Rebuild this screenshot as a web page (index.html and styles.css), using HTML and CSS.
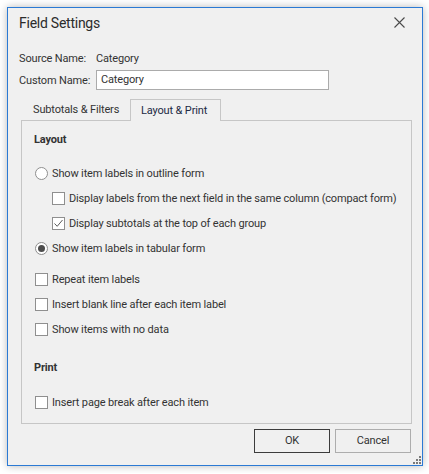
FILE: index.html
```html
<!DOCTYPE html>
<html>
<head>
<meta charset="utf-8">
<link rel="stylesheet" href="styles.css">
</head>
<body>
<div class="window">
  <div class="titlebar">
    <span class="title">Field Settings</span>
    <svg class="close" width="11" height="11" viewBox="0 0 11 11"><path d="M0.5 0.5 L10.5 10.5 M10.5 0.5 L0.5 10.5" stroke="#4a4a4a" stroke-width="1.1" fill="none"/></svg>
  </div>
  <div class="body">
    <div class="field-row">
      <span class="field-label">Source Name:</span>
      <span class="field-value">Category</span>
    </div>
    <div class="field-row field-row-2">
      <span class="field-label">Custom Name:</span>
      <div class="textbox">Category</div>
    </div>
    <div class="tabs">
      <div class="tab">Subtotals &amp; Filters</div>
      <div class="tab tab-active">Layout &amp; Print</div>
      <div class="tab-fill"></div>
    </div>
    <div class="panel">
      <div class="group-title">Layout</div>
      <div class="group">
        <div class="opt"><span class="radio"></span><span>Show item labels in outline form</span></div>
        <div class="opt opt-sub"><span class="check"></span><span>Display labels from the next field in the same column (compact form)</span></div>
        <div class="opt opt-sub"><span class="check"><svg width="11" height="11" viewBox="0 0 11 11"><path d="M1.5 5.5 L4.2 8.3 L9.5 2" stroke="#5a5a5a" stroke-width="1" fill="none"/></svg></span><span>Display subtotals at the top of each group</span></div>
        <div class="opt"><span class="radio radio-on"></span><span>Show item labels in tabular form</span></div>
      </div>
      <div class="group group-2">
        <div class="opt"><span class="check"></span><span>Repeat item labels</span></div>
        <div class="opt"><span class="check"></span><span>Insert blank line after each item label</span></div>
        <div class="opt"><span class="check"></span><span>Show items with no data</span></div>
      </div>
      <div class="group-title group-title-2">Print</div>
      <div class="group group-3">
        <div class="opt"><span class="check"></span><span>Insert page break after each item</span></div>
      </div>
    </div>
    <div class="buttons">
      <div class="btn btn-default">OK</div>
      <div class="btn">Cancel</div>
    </div>
  </div>
  <div class="grip">
    <span class="dot d1"></span>
    <span class="dot d2"></span><span class="dot d3"></span>
    <span class="dot d4"></span><span class="dot d5"></span><span class="dot d6"></span>
  </div>
</div>
</body>
</html>
```

FILE: styles.css
```css
html, body {
  margin: 0;
  padding: 0;
  background: #ffffff;
}
body {
  padding: 7px;
  font-family: Roboto, "Liberation Sans", sans-serif;
  font-size: 11px;
  letter-spacing: -0.15px;
  color: #333333;
  white-space: nowrap;
}
.window {
  position: relative;
  width: 414px;
  height: 457px;
  border: 1px solid #2b7ad4;
  background: #f0f0f0;
  box-shadow: 0 0 8px rgba(0, 0, 0, 0.28);
  display: flex;
  flex-direction: column;
}
.titlebar {
  height: 30px;
  display: flex;
  align-items: center;
  justify-content: space-between;
  padding: 0 17px 0 11px;
}
.title {
  font-size: 14px;
  letter-spacing: -0.25px;
  color: #2b2b2b;
}
.close {
  display: block;
  margin-top: -1px;
}
.body {
  padding: 10px 10px 12px 11px;
  display: flex;
  flex-direction: column;
}
.field-row {
  height: 20px;
  display: flex;
  align-items: center;
}
.field-row-2 {
  margin-top: 2px;
}
.field-label {
  width: 77px;
  flex: none;
}
.textbox {
  width: 227px;
  height: 18px;
  border: 1px solid #ababab;
  background: #ffffff;
  padding-left: 4px;
  line-height: 18px;
}
.tabs {
  margin-top: 9px;
  margin-left: 2px;
  display: flex;
  height: 22px;
}
.tab {
  width: 97px;
  height: 21px;
  padding-left: 12px;
  line-height: 21px;
  border-bottom: 1px solid #c6c6c6;
}
.tab-active {
  width: 79px;
  height: 21px;
  padding-left: 10px;
  border: 1px solid #c6c6c6;
  border-bottom: none;
  line-height: 21px;
  color: #222a44;
}
.tab-fill {
  flex: 1;
  border-bottom: 1px solid #c6c6c6;
}
.panel {
  margin-left: 2px;
  border: 1px solid #c6c6c6;
  border-top: none;
  padding: 9px 12px 8px 13px;
  display: flex;
  flex-direction: column;
}
.group-title {
  height: 20px;
  line-height: 20px;
  font-weight: bold;
  margin-left: -1px;
  color: #333333;
}
.group {
  margin-top: 11px;
  display: flex;
  flex-direction: column;
}
.group-2 {
  margin-top: 6px;
}
.group-title-2 {
  margin-top: 16px;
}
.group-3 {
  margin-top: 12px;
}
.opt {
  height: 25px;
  display: flex;
  align-items: center;
}
.opt-sub {
  padding-left: 17px;
}
.radio {
  width: 11px;
  height: 11px;
  border: 1px solid #8f8f8f;
  border-radius: 50%;
  background: #ffffff;
  margin-right: 4px;
  flex: none;
  display: flex;
  align-items: center;
  justify-content: center;
}
.radio-on::after {
  content: "";
  width: 7px;
  height: 7px;
  border-radius: 50%;
  background: #4d4d4d;
}
.check {
  width: 11px;
  height: 11px;
  border: 1px solid #8f8f8f;
  background: #ffffff;
  margin-right: 4px;
  flex: none;
  display: flex;
}
.check svg {
  display: block;
}
.buttons {
  margin-top: 5px;
  display: flex;
  justify-content: flex-end;
  gap: 5px;
  padding-right: 1px;
}
.btn {
  width: 74px;
  height: 22px;
  border: 1px solid #adadad;
  background: #f0f0f0;
  text-align: center;
  line-height: 22px;
}
.btn-default {
  border-color: #3c3c3c;
}
.grip {
  position: absolute;
  right: 1px;
  bottom: 1px;
  width: 8px;
  height: 8px;
}
.dot {
  position: absolute;
  width: 2px;
  height: 2px;
  background: #7a7a7a;
}
.d1 { right: 0; top: 0; }
.d2 { right: 3px; top: 3px; }
.d3 { right: 0; top: 3px; }
.d4 { right: 6px; top: 6px; }
.d5 { right: 3px; top: 6px; }
.d6 { right: 0; top: 6px; }
```
